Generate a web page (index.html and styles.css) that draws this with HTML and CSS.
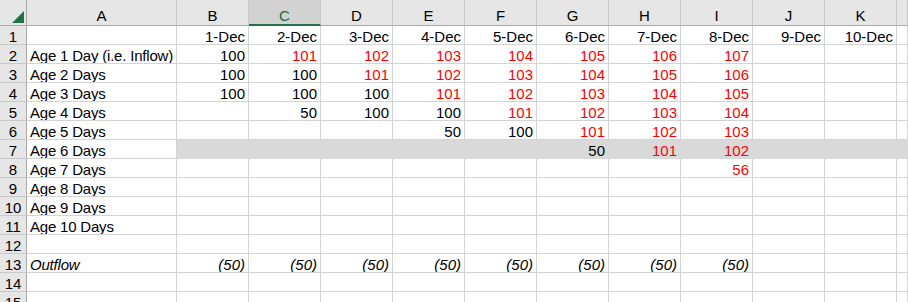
FILE: index.html
```
<!DOCTYPE html>
<html lang="en">

    <head>
        <meta charset="UTF-8">
        <meta name="viewport" content="width=device-width, initial-scale=1.0">
        <title>Ageing</title>
        <link rel="stylesheet" href="styles.css">
    </head>

    <body>
        <div class="sheet">
            <div class="row head">
                <div class="corner">
                    <svg width="12" height="12" viewBox="0 0 12 12"><polygon points="12,0 12,12 0,12" fill="#217346" /></svg>
                </div>
                <div>A</div><div>B</div><div class="sel">C</div><div>D</div><div>E</div><div>F</div>
                <div>G</div><div>H</div><div>I</div><div>J</div><div>K</div><div></div>
            </div>
            <div class="row">
                <div class="num">1</div><div></div>
                <div>1-Dec</div><div>2-Dec</div><div>3-Dec</div><div>4-Dec</div><div>5-Dec</div>
                <div>6-Dec</div><div>7-Dec</div><div>8-Dec</div><div>9-Dec</div><div>10-Dec</div><div></div>
            </div>
            <div class="row">
                <div class="num">2</div><div class="label">Age 1 Day (i.e. Inflow)</div>
                <div>100</div><div class="red">101</div><div class="red">102</div><div class="red">103</div><div class="red">104</div>
                <div class="red">105</div><div class="red">106</div><div class="red">107</div><div></div><div></div><div></div>
            </div>
            <div class="row">
                <div class="num">3</div><div class="label">Age 2 Days</div>
                <div>100</div><div>100</div><div class="red">101</div><div class="red">102</div><div class="red">103</div>
                <div class="red">104</div><div class="red">105</div><div class="red">106</div><div></div><div></div><div></div>
            </div>
            <div class="row">
                <div class="num">4</div><div class="label">Age 3 Days</div>
                <div>100</div><div>100</div><div>100</div><div class="red">101</div><div class="red">102</div>
                <div class="red">103</div><div class="red">104</div><div class="red">105</div><div></div><div></div><div></div>
            </div>
            <div class="row">
                <div class="num">5</div><div class="label">Age 4 Days</div>
                <div></div><div>50</div><div>100</div><div>100</div><div class="red">101</div>
                <div class="red">102</div><div class="red">103</div><div class="red">104</div><div></div><div></div><div></div>
            </div>
            <div class="row">
                <div class="num">6</div><div class="label">Age 5 Days</div>
                <div></div><div></div><div></div><div>50</div><div>100</div>
                <div class="red">101</div><div class="red">102</div><div class="red">103</div><div></div><div></div><div></div>
            </div>
            <div class="row shade">
                <div class="num">7</div><div class="label">Age 6 Days</div>
                <div></div><div></div><div></div><div></div><div></div>
                <div>50</div><div class="red">101</div><div class="red">102</div><div></div><div></div><div></div>
            </div>
            <div class="row">
                <div class="num">8</div><div class="label">Age 7 Days</div>
                <div></div><div></div><div></div><div></div><div></div>
                <div></div><div></div><div class="red">56</div><div></div><div></div><div></div>
            </div>
            <div class="row">
                <div class="num">9</div><div class="label">Age 8 Days</div>
                <div></div><div></div><div></div><div></div><div></div><div></div><div></div><div></div><div></div><div></div><div></div>
            </div>
            <div class="row">
                <div class="num">10</div><div class="label">Age 9 Days</div>
                <div></div><div></div><div></div><div></div><div></div><div></div><div></div><div></div><div></div><div></div><div></div>
            </div>
            <div class="row">
                <div class="num">11</div><div class="label">Age 10 Days</div>
                <div></div><div></div><div></div><div></div><div></div><div></div><div></div><div></div><div></div><div></div><div></div>
            </div>
            <div class="row">
                <div class="num">12</div><div class="label"></div>
                <div></div><div></div><div></div><div></div><div></div><div></div><div></div><div></div><div></div><div></div><div></div>
            </div>
            <div class="row italic">
                <div class="num">13</div><div class="label">Outflow</div>
                <div>(50)</div><div>(50)</div><div>(50)</div><div>(50)</div><div>(50)</div>
                <div>(50)</div><div>(50)</div><div>(50)</div><div></div><div></div><div></div>
            </div>
            <div class="row">
                <div class="num">14</div><div class="label"></div>
                <div></div><div></div><div></div><div></div><div></div><div></div><div></div><div></div><div></div><div></div><div></div>
            </div>
            <div class="row">
                <div class="num">15</div><div class="label"></div>
                <div></div><div></div><div></div><div></div><div></div><div></div><div></div><div></div><div></div><div></div><div></div>
            </div>
        </div>
    </body>

</html>
```

FILE: styles.css
```
* {
    box-sizing: border-box;
    padding: 0;
    margin: 0;
}

body {
    width: 908px;
    height: 302px;
    overflow: hidden;
    background-color: #fff;
    font-family: "Liberation Sans", Arial, sans-serif;
    font-size: 15px;
    color: #000;
}

.sheet {
    display: flex;
    flex-direction: column;
}

.row {
    display: grid;
    grid-template-columns: 27px 150px repeat(10, 72px) 1fr;
    height: 19px;
}

.row div {
    border-right: 1px solid #d4d4d4;
    border-bottom: 1px solid #d4d4d4;
    padding: 3px 3px 0 3px;
    line-height: 15px;
    text-align: right;
    white-space: nowrap;
    overflow: hidden;
}

.row .label {
    text-align: left;
    letter-spacing: -0.2px;
}

.row .num {
    text-align: center;
    padding: 3px 0 0 0;
    background-color: #e6e6e6;
    border-right-color: #ababab;
    border-bottom-color: #c8c8c8;
}

.row .red {
    color: #ff0000;
}

/* column letters */
.head {
    height: 26px;
    background-color: #e6e6e6;
}

.head div {
    text-align: center;
    padding: 8px 0 0 0;
    border-right-color: #c8c8c8;
    border-bottom-color: #ababab;
}

.head .sel {
    background-color: #d2d2d2;
    color: #1b6a3d;
    border-bottom: 2px solid #217346;
}

.head .corner {
    display: flex;
    justify-content: flex-end;
    align-items: flex-end;
    padding: 0 2px 2px 0;
    border-right-color: #ababab;
}

.corner svg {
    display: block;
}

/* filled band on row 7 covers the gridlines */
.shade div:nth-child(n+3) {
    background-color: #d9d9d9;
    border-right-color: #d9d9d9;
    border-bottom-color: #d9d9d9;
}

.italic div:not(.num) {
    font-style: italic;
}
```
